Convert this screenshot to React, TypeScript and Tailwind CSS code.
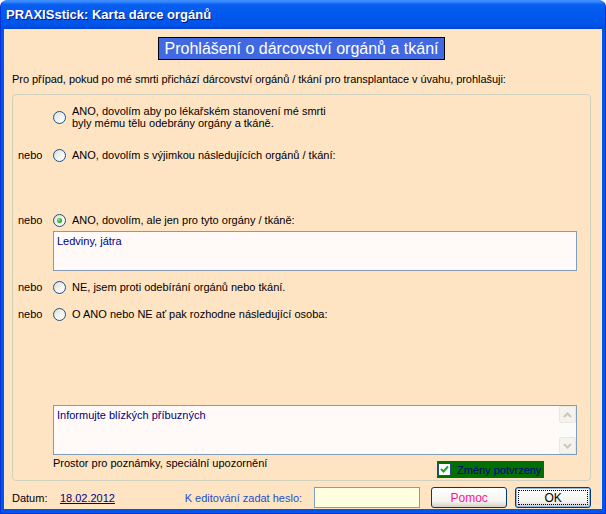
import React from 'react';

const font = "font-['Liberation_Sans',Arial,sans-serif]";

function Radio({ checked = false }: { checked?: boolean }) {
    return (
        <div className="w-[13px] h-[13px] shrink-0 rounded-full border border-[#1C5180] bg-[linear-gradient(135deg,#DCDCD7_0%,#F4F4F0_55%,#FFFFFF_100%)] flex items-center justify-center">
            {checked && <div className="w-[5px] h-[5px] rounded-full bg-[radial-gradient(circle_at_35%_35%,#8BE38B,#21A121_70%)]" />}
        </div>
    );
}

function Nebo({ show = true }: { show?: boolean }) {
    return <div className="w-[40px] shrink-0 pl-[5px]">{show ? 'nebo' : ''}</div>;
}

function ArrowBox({ up }: { up?: boolean }) {
    return (
        <div className="h-[17px] w-[17px] rounded-[2px] border border-[#E8E8E0] bg-[#F4F3EE] flex items-center justify-center">
            <svg width="9" height="6" viewBox="0 0 9 6">
                <path d={up ? 'M1 5 L4.5 1.5 L8 5' : 'M1 1 L4.5 4.5 L8 1'} fill="none" stroke="#C9C7BA" strokeWidth="2" />
            </svg>
        </div>
    );
}

export default function App() {
    return (
        <div className={`w-[606px] h-[514px] bg-white ${font} text-[11px] leading-[12px] text-black`}>
            <div className="w-[606px] h-[514px] flex flex-col rounded-t-[7px] bg-[#0055EA] border border-[#0831D9] border-t-[#3D8BFF] overflow-hidden">
                {/* Title bar */}
                <div className="h-[28px] shrink-0 flex items-center pl-[5px] bg-[linear-gradient(to_bottom,#3D95FF_0%,#0A5FEF_12%,#0058EE_50%,#0055E8_85%,#0046D4_100%)]">
                    <span className="text-white font-bold text-[13px] [text-shadow:1px_1px_#0A1883]">PRAXISstick: Karta dárce orgánů</span>
                </div>

                {/* Body */}
                <div className="flex-1 mx-[3px] mb-[4px] bg-[#FFE4C4] flex flex-col pl-[8px] pr-[11px]">
                    <div className="flex justify-center mt-[8px]">
                        <div className="h-[23px] px-[6px] bg-[#4169E1] border border-black text-white text-[16px] leading-[21px]">
                            Prohlášení o dárcovství orgánů a tkání
                        </div>
                    </div>
                    <div className="mt-[13px] h-[12px] tracking-[-0.05px]">Pro případ, pokud po mé smrti přichází dárcovství orgánů / tkání pro transplantace v úvahu, prohlašuji:</div>

                    {/* Group box */}
                    <div className="mt-[9px] h-[387px] rounded-[4px] border border-[#D0D0BF] flex flex-col">
                        <div className="mt-[10px] flex items-center">
                            <Nebo show={false} />
                            <Radio />
                            <div className="ml-[6px]">
                                ANO, dovolím aby po lékařském stanovení mé smrti<br />byly mému tělu odebrány orgány a tkáně.
                            </div>
                        </div>
                        <div className="mt-[19px] h-[14px] flex items-center">
                            <Nebo />
                            <Radio />
                            <div className="ml-[6px]">ANO, dovolím s výjimkou následujících orgánů / tkání:</div>
                        </div>
                        <div className="mt-[51px] h-[14px] flex items-center">
                            <Nebo />
                            <Radio checked />
                            <div className="ml-[6px]">ANO, dovolím, ale jen pro tyto orgány / tkáně:</div>
                        </div>
                        <div className="mt-[4px] ml-[40px] w-[524px] h-[40px] border border-[#7F9DB9] bg-[#FFFAF8] text-[#000080] px-[3px] pt-[3px]">
                            Ledviny, játra
                        </div>
                        <div className="mt-[9px] h-[14px] flex items-center">
                            <Nebo />
                            <Radio />
                            <div className="ml-[6px]">NE, jsem proti odebírání orgánů nebo tkání.</div>
                        </div>
                        <div className="mt-[13px] h-[14px] flex items-center">
                            <Nebo />
                            <Radio />
                            <div className="ml-[6px]">O ANO nebo NE ať pak rozhodne následující osoba:</div>
                        </div>
                        <div className="mt-[84px] ml-[40px] w-[524px] h-[50px] border border-[#7F9DB9] bg-[#FFFAF8] flex">
                            <div className="flex-1 text-[#000080] px-[3px] pt-[3px]">Informujte blízkých příbuzných</div>
                            <div className="w-[17px] flex flex-col justify-between bg-[#FBFBF8]">
                                <ArrowBox up />
                                <ArrowBox />
                            </div>
                        </div>
                        <div className="ml-[40px] w-[524px] flex justify-between">
                            <div className="mt-[2px] h-[12px]">Prostor pro poznámky, speciální upozornění</div>
                            <div className="mt-[6px] mr-[33px] w-[107px] h-[17px] bg-[#007000] flex items-center pl-[1px] shrink-0">
                                <div className="w-[13px] h-[13px] shrink-0 border border-[#1C5180] bg-white flex items-center justify-center">
                                    <svg width="9" height="9" viewBox="0 0 9 9">
                                        <path d="M1 4 L3.5 6.5 L8 1.5" fill="none" stroke="#21A121" strokeWidth="2" />
                                    </svg>
                                </div>
                                <span className="ml-[6px] text-[#000080] text-[11px] whitespace-nowrap">Změny potvrzeny</span>
                            </div>
                        </div>
                    </div>

                    {/* Bottom row */}
                    <div className="mt-[6px] h-[21px] flex items-center">
                        <span className="w-[48px]">Datum:</span>
                        <span className="w-[125px] text-[#000080] underline">18.02.2012</span>
                        <span className="w-[130px] text-[#2050C8]">K editování zadat heslo:</span>
                        <div className="w-[106px] h-[21px] border border-[#7F9DB9] bg-[#FFFFE0]" />
                        <button className="ml-[11px] w-[76px] h-[21px] rounded-[3px] border border-[#003C74] bg-[linear-gradient(to_bottom,#FFFFFF,#F3F3EF_70%,#D6D0C5)] text-[#FF1493] text-[12px]">
                            Pomoc
                        </button>
                        <button className="ml-[8px] w-[76px] h-[21px] rounded-[3px] border border-[#003C74] bg-[linear-gradient(to_bottom,#FFFFFF,#F3F3EF_70%,#D6D0C5)] p-[2px] shadow-[inset_0_0_0_1px_#97B6EA]">
                            <div className="w-full h-full border border-dotted border-black flex items-center justify-center text-[12px]">OK</div>
                        </button>
                    </div>
                </div>
            </div>
        </div>
    );
}
